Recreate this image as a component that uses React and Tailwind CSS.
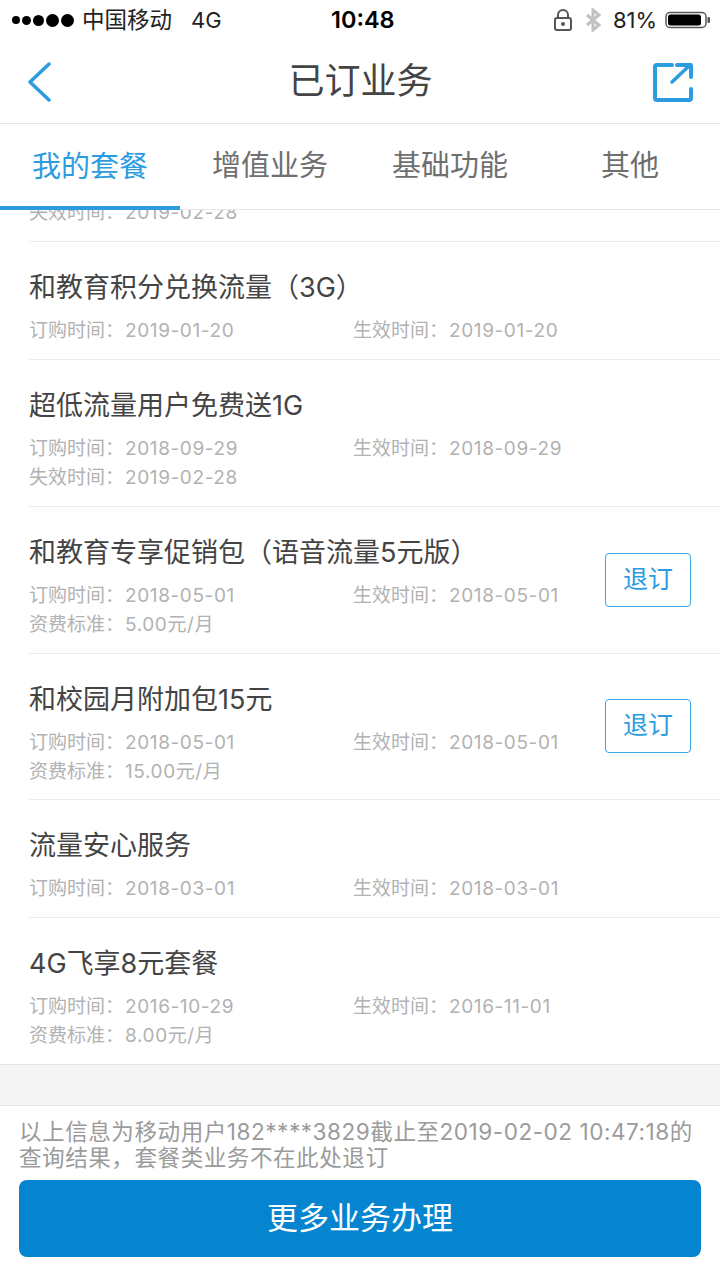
const FONT = 'font-["Inter","Noto_Sans_CJK_SC",sans-serif]';

const TABS = ['我的套餐', '增值业务', '基础功能', '其他'];

const ROWS = [
  { name: '和教育积分兑换流量（3G）', order: '2019-01-20', start: '2019-01-20' },
  { name: '超低流量用户免费送1G', order: '2018-09-29', start: '2018-09-29', extraLabel: '失效时间', extra: '2019-02-28' },
  { name: '和教育专享促销包（语音流量5元版）', order: '2018-05-01', start: '2018-05-01', extraLabel: '资费标准', extra: '5.00元/月', cancel: true },
  { name: '和校园月附加包15元', order: '2018-05-01', start: '2018-05-01', extraLabel: '资费标准', extra: '15.00元/月', cancel: true, tight: true },
  { name: '流量安心服务', order: '2018-03-01', start: '2018-03-01' },
  { name: '4G飞享8元套餐', order: '2016-10-29', start: '2016-11-01', extraLabel: '资费标准', extra: '8.00元/月' },
];

function StatusBar() {
  return (
    <div className="flex h-[40px] items-center text-black">
      <div className="ml-[12px] flex w-[62px] items-center gap-[2px]">
        <span className="h-[8px] w-[8px] rounded-full bg-black" />
        <span className="h-[9px] w-[9px] rounded-full bg-black" />
        <span className="h-[11px] w-[11px] rounded-full bg-black" />
        <span className="h-[13px] w-[13px] rounded-full bg-black" />
        <span className="h-[13px] w-[13px] rounded-full bg-black" />
      </div>
      <span className="ml-[8px] w-[109px] text-[22.5px] text-[#222]">中国移动</span>
      <span className="w-[140px] text-[22px] text-[#222]">4G</span>
      <span className="w-[222px] text-[23.5px] font-semibold">10:48</span>
      <svg width="20" height="24" viewBox="0 0 20 24" fill="none" stroke="#555" strokeWidth="2">
        <rect x="2" y="10" width="16" height="12" rx="2" />
        <path d="M5 10V7a5 5 0 0 1 10 0v3" />
        <circle cx="10" cy="16" r="1" fill="#555" />
      </svg>
      <svg className="ml-[11px]" width="18" height="24" viewBox="0 0 18 24" fill="none" stroke="#c2c2c2" strokeWidth="3">
        <path d="M3 7l12 10-6 5V2l6 5L3 17" />
      </svg>
      <span className="ml-[11px] text-[22px] text-[#222]">81%</span>
      <svg className="ml-[8px]" width="46" height="18" viewBox="0 0 46 18">
        <rect x="1" y="1.5" width="40" height="15" rx="4" fill="none" stroke="#555" strokeWidth="1.5" />
        <rect x="3" y="3.5" width="33" height="11" rx="2.5" fill="#000" />
        <rect x="42.5" y="6" width="2.5" height="6" rx="1" fill="#555" />
      </svg>
    </div>
  );
}

function NavBar() {
  return (
    <div className="grid h-[84px] grid-cols-[1fr_auto_1fr] items-center border-b border-[#e6e6e6] pl-[28px] pr-[27px]">
      <svg width="24" height="42" viewBox="0 0 24 42" fill="none" stroke="#2b9cdf" strokeWidth="3.5" strokeLinecap="round" strokeLinejoin="round">
        <path d="M21 3L2 21l19 18" />
      </svg>
      <h1 className="mt-[-2px] text-[36px] font-normal leading-none text-[#444]">已订业务</h1>
      <svg className="justify-self-end" width="40" height="40" viewBox="0 0 40 40" fill="none" stroke="#2b9cdf" strokeLinecap="round" strokeLinejoin="round">
        <path d="M19 3H4a2 2 0 0 0-2 2v31a2 2 0 0 0 2 2h32a2 2 0 0 0 2-2V27" strokeWidth="4" />
        <path d="M19 20L37 3" strokeWidth="3.5" />
        <path d="M24 3h14v12" strokeWidth="4" />
      </svg>
    </div>
  );
}

function Tabs() {
  return (
    <div className="grid h-[86px] grid-cols-4 border-b border-[#e6e6e6]">
      {TABS.map((tab, i) => (
        <div
          key={tab}
          className={
            i === 0
              ? 'mb-[-1px] flex items-center justify-center border-b-4 border-[#2b9cdf] pt-[4px] text-[29px] text-[#2b9cdf]'
              : 'flex items-center justify-center pb-[1px] text-[29px] text-[#6f6f6f]'
          }
        >
          {tab}
        </div>
      ))}
    </div>
  );
}

function Meta({ label, value }) {
  return (
    <span>
      {label}：<span className="ml-[1px] tracking-[0.6px]">{value}</span>
    </span>
  );
}

function ServiceRow({ row, last }) {
  return (
    <div className={last ? 'border-b border-[#e6e6e6]' : 'pl-[29px]'}>
      <div className={last ? 'ml-[29px] flex items-center justify-between pr-[29px]' : 'flex items-center justify-between border-b border-[#ececec] pr-[29px]'}>
        <div className={row.tight ? 'pb-[13px] pt-[26px]' : 'pb-[14px] pt-[26px]'}>
          <div className="h-[40px] text-[27px] leading-[40px] text-[#444]">{row.name}</div>
          <div className="mt-[8px] grid w-[540px] grid-cols-[324px_1fr] text-[19px] leading-[29px] text-[#b2b2b2]">
            <Meta label="订购时间" value={row.order} />
            <Meta label="生效时间" value={row.start} />
            {row.extra ? <Meta label={row.extraLabel} value={row.extra} /> : null}
          </div>
        </div>
        {row.cancel ? (
          <button className={row.tight ? 'mb-[2px] h-[54px] w-[86px] rounded-[4px] border border-[#3aa6e6] text-[25px] text-[#2b9cdf]' : 'h-[54px] w-[86px] rounded-[4px] border border-[#3aa6e6] text-[25px] text-[#2b9cdf]'}>
            退订
          </button>
        ) : null}
      </div>
    </div>
  );
}

export default function App() {
  return (
    <div className={`flex h-[1280px] w-[720px] flex-col overflow-hidden bg-white ${FONT}`}>
      <StatusBar />
      <NavBar />
      <Tabs />

      <div className="pl-[29px]">
        <div className="flex h-[32px] items-start overflow-hidden border-b border-[#ececec] text-[19px] leading-[29px] text-[#b2b2b2]">
          <span className="mt-[-12px]">
            <Meta label="失效时间" value="2019-02-28" />
          </span>
        </div>
      </div>

      {ROWS.map((row, i) => (
        <ServiceRow key={row.name} row={row} last={i === ROWS.length - 1} />
      ))}

      <div className="h-[41px] border-b border-[#e6e6e6] bg-[#f5f5f5]" />

      <div className="px-[19px]">
        <p className="mt-[13px] text-[22.6px] leading-[26px] tracking-[0.5px] text-[#9b9b9b]">
          以上信息为移动用户182****3829截止至2019-02-02 10:47:18的查询结果，套餐类业务不在此处退订
        </p>
        <button className="mt-[9px] h-[77px] w-full rounded-[8px] bg-[#0585cf] text-[31px] text-white">更多业务办理</button>
      </div>
    </div>
  );
}
